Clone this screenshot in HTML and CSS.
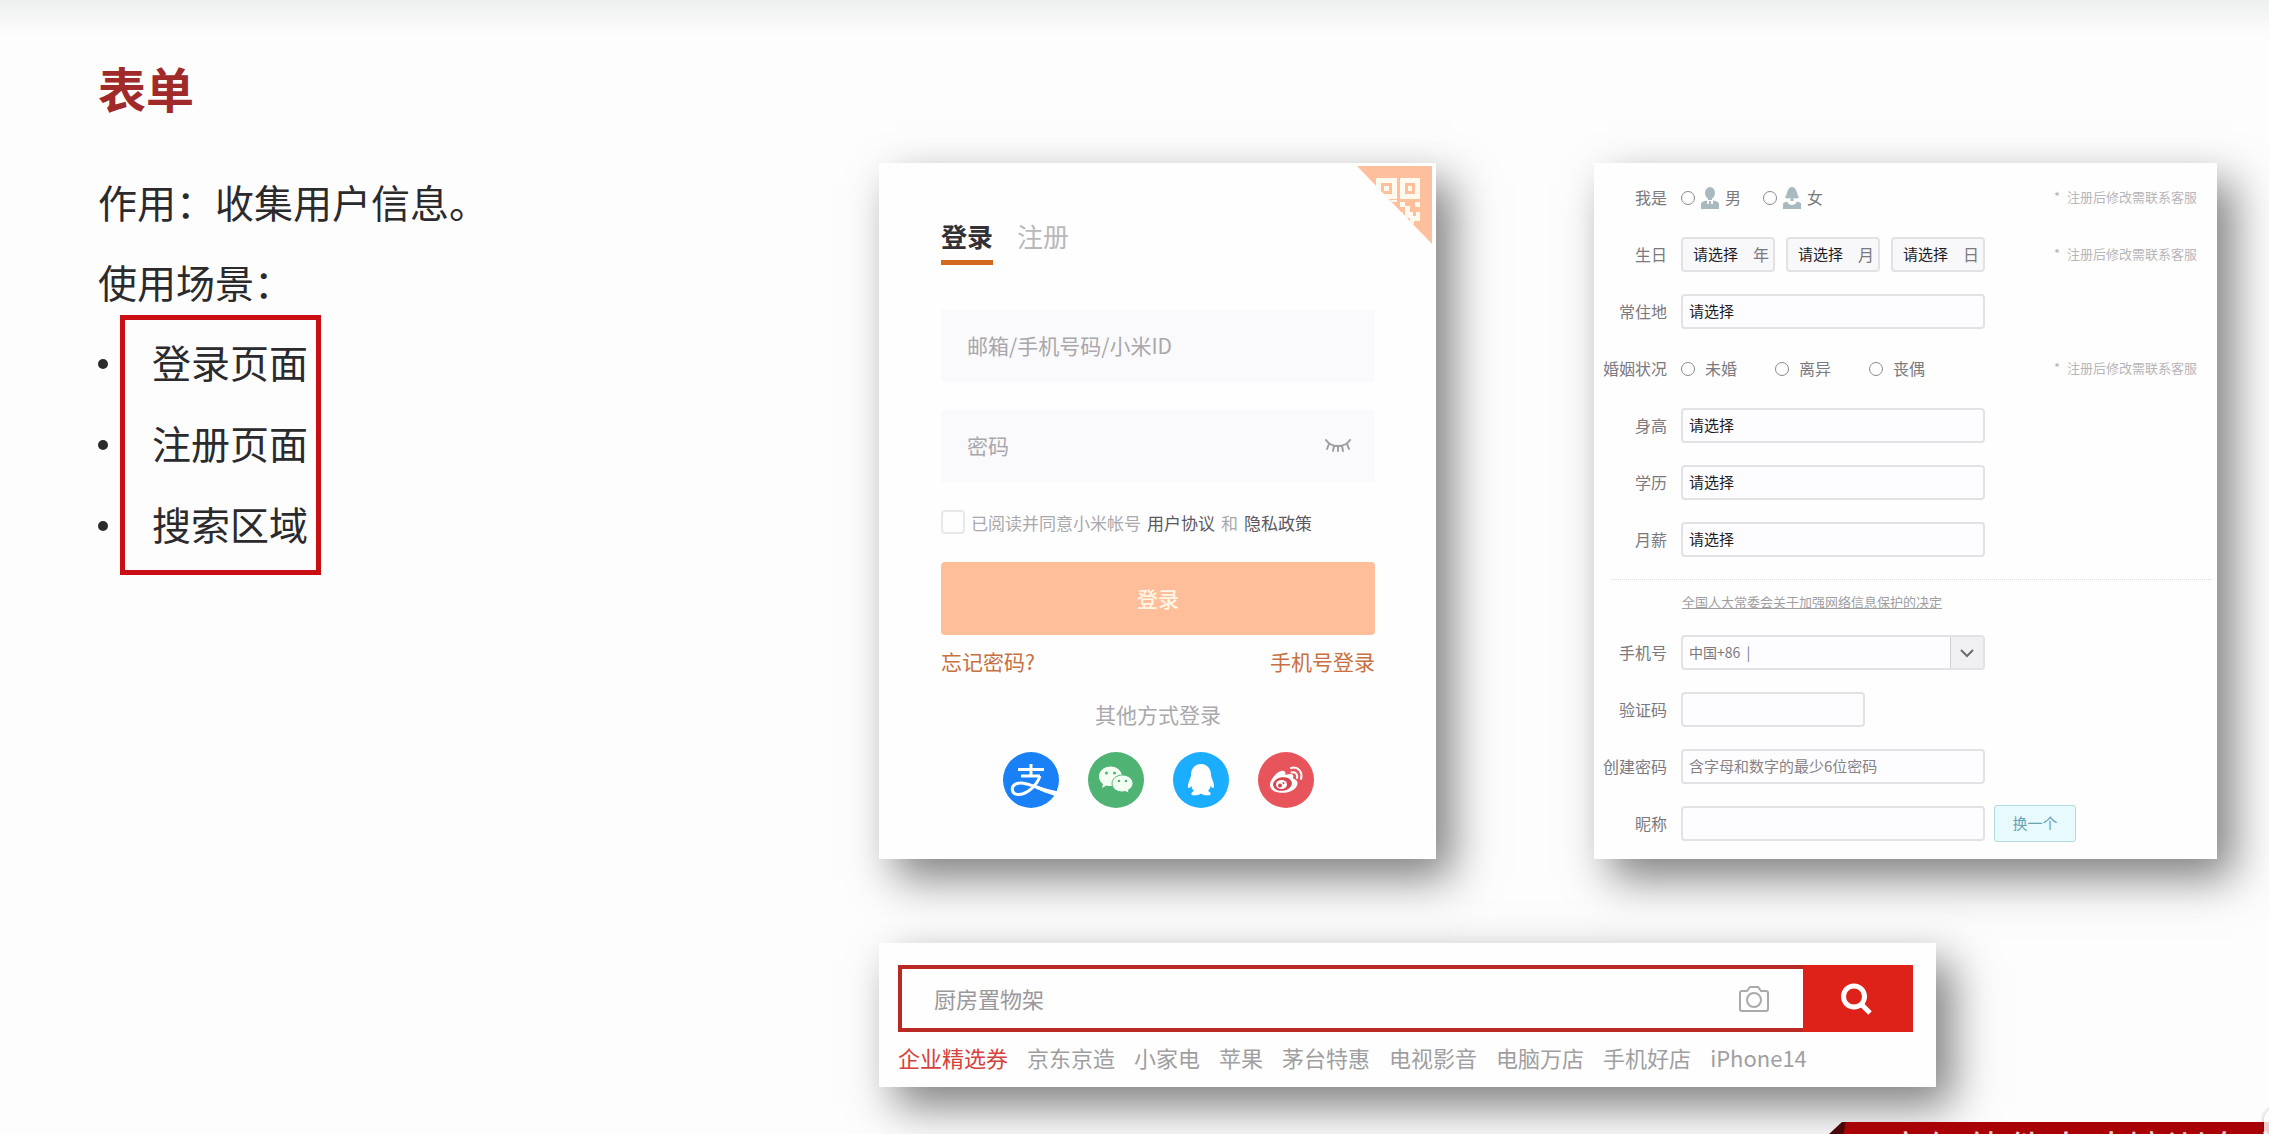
FILE: index.html
```html
<!DOCTYPE html>
<html lang="zh-CN">
<head>
<meta charset="utf-8">
<meta name="viewport" content="width=device-width, initial-scale=1">
<title>表单</title>
<link rel="stylesheet" href="styles.css">
</head>
<body>
<main class="slide">
  <section class="intro">
    <h1 class="title">表单</h1>
    <p class="line">作用：收集用户信息。</p>
    <p class="line">使用场景：</p>
    <ul class="scenes">
      <li>登录页面</li>
      <li>注册页面</li>
      <li>搜索区域</li>
    </ul>
  </section>

  <div class="examples">
    <div class="cards">
      <form class="card login">
        <svg class="qr" viewBox="0 0 75 78" aria-hidden="true">
          <defs><clipPath id="corner"><path d="M0 0H75V78Z"/></clipPath></defs>
          <path d="M0 0H75V78Z" fill="#febf9c"/>
          <g clip-path="url(#corner)">
            <path fill="#fffaf0" fill-rule="evenodd" d="M19 12H40V33H19ZM24 17V28H35V17ZM43 12H63V33H43ZM48 17V28H58V17Z"/>
            <path fill="#fffaf0" d="M27 20H32V25H27ZM51 20H55V25H51ZM43 36H48V41H43ZM58 36H63V41H58ZM48 40H53V46H56V50H59V46H63V55H57V58H53V52H48ZM43 46H46V50H43ZM34 34H40V36H34Z"/>
          </g>
        </svg>
        <div class="tabs">
          <button type="button" class="tab tab-on">登录</button>
          <button type="button" class="tab">注册</button>
        </div>
        <div class="login-field">
          <input type="text" aria-label="帐号" placeholder="邮箱/手机号码/小米ID">
        </div>
        <div class="login-field">
          <input type="password" aria-label="密码" placeholder="密码">
          <button type="button" class="eye" aria-label="显示密码">
            <svg viewBox="0 0 26 14" fill="none" stroke="#a19ea4" stroke-width="2" stroke-linecap="round"><path d="M1 1C6 9 20 9 25 1M4 5 2 10M9 7 8 12M17 7 18 12M22 5 24 10M13 8V12"/></svg>
          </button>
        </div>
        <div class="agree">
          <input type="checkbox" id="agree">
          <label for="agree">已阅读并同意小米帐号</label>
          <a href="#">用户协议</a>
          <span>和</span>
          <a href="#">隐私政策</a>
        </div>
        <button type="submit" class="submit">登录</button>
        <div class="help">
          <a href="#">忘记密码?</a>
          <a href="#">手机号登录</a>
        </div>
        <p class="other">其他方式登录</p>
        <div class="social">
          <a href="#" aria-label="支付宝">
            <svg viewBox="0 0 56 56">
              <circle cx="28" cy="28" r="28" fill="#1a80f5"/>
              <g fill="none" stroke="#fff" stroke-width="3">
                <path d="M15 17.500H41M28 12V24M18 24H37"/>
                <path d="M37 24C34 33 25 42 16 42.500C8 42.500 7 34 14 31.500C22 29 34 36 44 39"/>
              </g>
              <path d="M34 33.500C41 36.500 48 38 55 39.500L52 44C46 42 38 39 32 36Z" fill="#fff"/>
            </svg>
          </a>
          <a href="#" aria-label="微信">
            <svg viewBox="0 0 56 56">
              <circle cx="28" cy="28" r="28" fill="#4fb373"/>
              <path d="M22.500 14.500C16 14.500 11 19 11 24.500C11 27.500 12.500 30 15 32L14 36L18.500 33.500C25 35.500 34 32 34 24.500C34 19 29 14.500 22.500 14.500Z" fill="#f4fff4"/>
              <path d="M34.500 23C28.500 23 24 27 24 31.500C24 37 30 41.500 37.500 39.500L41 41.500L40.500 38C43 36.500 45 34 45 31.500C45 27 40.500 23 34.500 23Z" fill="#f4fff4" stroke="#4fb373"/>
              <g fill="#4fb373"><circle cx="18.500" cy="21" r="1.500"/><circle cx="26.500" cy="21" r="1.500"/><circle cx="31" cy="29" r="1.300"/><circle cx="38" cy="29" r="1.300"/></g>
            </svg>
          </a>
          <a href="#" aria-label="QQ">
            <svg viewBox="0 0 56 56">
              <circle cx="28" cy="28" r="28" fill="#1badff"/>
              <path d="M28 12C21.500 12 18 17 18 23C18 25 17 26 16.500 28C15 32 14 36 16 36C17 36 18 34 18.500 34C18.500 36 19.500 37.500 21 39C19 40 18 41 18.500 42.500C19.500 44 26 43.500 28 41.500C30 43.500 36.500 44 37.500 42.500C38 41 37 40 35 39C36.500 37.500 37.500 36 37.500 34C38 34 39 36 40 36C42 36 41 32 39.500 28C39 26 38 25 38 23C38 17 34.500 12 28 12Z" fill="#fff"/>
            </svg>
          </a>
          <a href="#" aria-label="微博">
            <svg viewBox="0 0 56 56">
              <circle cx="28" cy="28" r="28" fill="#e8545b"/>
              <path d="M23 19C26 18 28 19.500 27.500 23C33 21 36.500 22 35 26.500C42 28.500 40 35 35 38C27 43 12 41.500 12 33C12 28 18 20.500 23 19Z" fill="#fff"/>
              <ellipse cx="24.500" cy="32" rx="9.500" ry="6.800" fill="#d9434c" transform="rotate(-8 24.500 32)"/>
              <ellipse cx="23.500" cy="32.500" rx="5.500" ry="4.600" fill="#fff"/>
              <circle cx="22" cy="33.500" r="2" fill="#d9434c"/><circle cx="25.500" cy="31" r="1" fill="#d9434c"/>
              <g fill="none" stroke="#fff" stroke-width="2" stroke-linecap="round"><path d="M33 16C40 14 45 20 43 27"/><path d="M33.500 20.500C37 19.500 40 22 39 26"/></g>
            </svg>
          </a>
        </div>
      </form>

      <form class="card register">
        <div class="rows">
          <div class="row" role="radiogroup" aria-label="我是">
            <span class="name">我是</span>
            <div class="genders">
              <label class="gender">
                <input type="radio" name="gender">
                <svg viewBox="0 0 18 22" fill="#a9b9c0"><ellipse cx="9" cy="6" rx="5" ry="6"/><path d="M7 10H11V13H7ZM0 22V17C0 15 3 14 6 13.500V17H8V14H10V17H12V13.500C15 14 18 15 18 17V22Z"/></svg>
                <span>男</span>
              </label>
              <label class="gender">
                <input type="radio" name="gender">
                <svg viewBox="0 0 18 22" fill="#a9b9c0"><path d="M9 0C4 0 4.500 7 2 10.500C4 12 6 11.500 7.500 11V14H10.500V11C12 11.500 14 12 16 10.500C13.500 7 14 0 9 0ZM0 22V17C0 15.500 2 15 4 14.500C6 19 12 19 14 14.500C16 15 18 15.500 18 17V22Z"/></svg>
                <span>女</span>
              </label>
            </div>
            <span class="note"><span>*</span><span>注册后修改需联系客服</span></span>
          </div>
          <div class="row" role="group" aria-label="生日">
            <span class="name">生日</span>
            <div class="dates">
              <label class="date"><select><option>请选择</option></select><span>年</span></label>
              <label class="date"><select><option>请选择</option></select><span>月</span></label>
              <label class="date"><select><option>请选择</option></select><span>日</span></label>
            </div>
            <span class="note"><span>*</span><span>注册后修改需联系客服</span></span>
          </div>
          <div class="row">
            <label class="name" for="city">常住地</label>
            <select class="field" id="city"><option>请选择</option></select>
          </div>
          <div class="row" role="radiogroup" aria-label="婚姻状况">
            <span class="name">婚姻状况</span>
            <div class="marriage">
              <label><input type="radio" name="marriage"><span>未婚</span></label>
              <label><input type="radio" name="marriage"><span>离异</span></label>
              <label><input type="radio" name="marriage"><span>丧偶</span></label>
            </div>
            <span class="note"><span>*</span><span>注册后修改需联系客服</span></span>
          </div>
          <div class="row">
            <label class="name" for="height">身高</label>
            <select class="field" id="height"><option>请选择</option></select>
          </div>
          <div class="row">
            <label class="name" for="degree">学历</label>
            <select class="field" id="degree"><option>请选择</option></select>
          </div>
          <div class="row">
            <label class="name" for="salary">月薪</label>
            <select class="field" id="salary"><option>请选择</option></select>
          </div>
        </div>
        <hr class="divider">
        <div class="rows">
          <a href="#" class="law">全国人大常委会关于加强网络信息保护的决定</a>
          <div class="row">
            <label class="name" for="phone">手机号</label>
            <div class="phone">
              <input type="text" id="phone" value="中国+86  |">
              <button type="button" aria-label="选择国家">
                <svg viewBox="0 0 14 10" fill="none" stroke="#6d6b70" stroke-width="2"><path d="M1 2 7 8 13 2"/></svg>
              </button>
            </div>
          </div>
          <div class="row">
            <label class="name" for="code">验证码</label>
            <input type="text" class="field field-short" id="code">
          </div>
          <div class="row">
            <label class="name" for="pass">创建密码</label>
            <input type="text" class="field" id="pass" placeholder="含字母和数字的最少6位密码">
          </div>
          <div class="row">
            <label class="name" for="nick">昵称</label>
            <input type="text" class="field" id="nick">
            <button type="button" class="swap">换一个</button>
          </div>
        </div>
      </form>
    </div>

    <form class="card search">
      <div class="bar">
        <input type="text" aria-label="搜索" placeholder="厨房置物架">
        <button type="button" class="camera" aria-label="拍照搜索">
          <svg viewBox="0 0 30 26" fill="none" stroke="#aaa" stroke-width="2"><path d="M3 5H8L11 1H19L22 5H27Q29 5 29 7V23Q29 25 27 25H3Q1 25 1 23V7Q1 5 3 5Z"/><circle cx="15" cy="14" r="7"/></svg>
        </button>
        <button type="submit" class="go" aria-label="搜索">
          <svg viewBox="0 0 32 32" fill="none" stroke="#fff" stroke-width="5"><circle cx="14" cy="13.500" r="10.500"/><path d="M21 21 30 30"/></svg>
        </button>
      </div>
      <nav class="hot">
        <a href="#" class="hot-on">企业精选券</a>
        <a href="#">京东京造</a>
        <a href="#">小家电</a>
        <a href="#">苹果</a>
        <a href="#">茅台特惠</a>
        <a href="#">电视影音</a>
        <a href="#">电脑万店</a>
        <a href="#">手机好店</a>
        <a href="#">iPhone14</a>
      </nav>
    </form>
  </div>
</main>
<div class="ribbon">高级软件人才培训专家</div>
<div class="handle"></div>
</body>
</html>
```

FILE: styles.css
```css
*,
*::before,
*::after {
  box-sizing: border-box;
}

body {
  position: relative;
  min-height: 100vh;
  margin: 0;
  overflow: hidden;
  background: linear-gradient(#eef0f0, #fefdfe 36px);
  color: #2b2a2c;
  font-family: "Noto Sans CJK SC", "Noto Sans", sans-serif;
}

h1,
p,
ul {
  margin: 0;
  padding: 0;
}

button,
input,
select {
  margin: 0;
  padding: 0;
  border: 0;
  outline: 0;
  background: none;
  font: inherit;
  color: inherit;
  appearance: none;
}

a {
  color: inherit;
  text-decoration: none;
}

svg {
  display: block;
}

.slide {
  display: grid;
  grid-template-columns: minmax(0, 781fr) minmax(0, 1338fr);
  padding: 58px 52px 47px 98px;
}

/* Explanation on the left */
.title {
  margin-bottom: 45px;
  color: #a02a2a;
  font-size: 48px;
  line-height: 58px;
}

.line {
  font-size: 39px;
  line-height: 80px;
}

.scenes {
  position: relative;
  list-style: none;
  font-size: 39px;
  line-height: 81px;
}

.scenes li {
  display: flex;
  align-items: center;
  gap: 44px;
}

.scenes li::before {
  content: "";
  width: 10px;
  height: 10px;
  margin-top: 4px;
  border-radius: 50%;
  background: #2b2a2c;
}

.scenes::after {
  content: "";
  position: absolute;
  top: -6px;
  bottom: -11px;
  left: 22px;
  width: 201px;
  border: 5px solid #c90f14;
}

/* Example cards */
.examples {
  padding-top: 105px;
}

.cards {
  display: grid;
  grid-template-columns: minmax(0, 557fr) minmax(0, 623fr);
  gap: 158px;
  margin-bottom: 84px;
}

.card {
  position: relative;
  background: #fefefe;
  box-shadow: 16px 19px 42px rgba(0, 0, 0, 0.5);
}

/* Login */
.login {
  padding: 54px 61px 51px 62px;
  font-size: 21px;
}

.qr {
  position: absolute;
  top: 3px;
  right: 4px;
  width: 75px;
  height: 78px;
}

.tabs {
  display: flex;
  align-items: flex-start;
  gap: 24px;
  margin-bottom: 45px;
}

.tab {
  padding-bottom: 5px;
  border-bottom: 5px solid transparent;
  color: #b9b7ba;
  font-size: 26px;
  line-height: 38px;
}

.tab-on {
  border-color: #d2691e;
  color: #333135;
  font-weight: 700;
}

.login-field {
  display: flex;
  align-items: center;
  height: 72px;
  margin-bottom: 28px;
  padding: 0 24px;
  background: #faf9fb;
}

.login-field input {
  flex: 1;
  min-width: 0;
  padding: 0 0 2px 2px;
}

.login-field input::placeholder {
  color: #a9a7ab;
}

.eye svg {
  width: 26px;
  height: 14px;
}

.agree {
  display: flex;
  align-items: center;
  gap: 6px;
  height: 24px;
  margin-bottom: 28px;
  color: #aaa8ac;
  font-size: 17px;
  white-space: nowrap;
}

.agree input {
  width: 24px;
  height: 24px;
  border: 2px solid #e9e7eb;
  border-radius: 4px;
}

.agree a {
  color: #5b595d;
}

.submit {
  display: block;
  width: 100%;
  height: 73px;
  margin-bottom: 11px;
  padding-bottom: 2px;
  border-radius: 4px;
  background: #ffbe9a;
  color: #fff6e6;
  font-weight: 500;
}

.help {
  display: flex;
  justify-content: space-between;
  margin-bottom: 23px;
  color: #c8703f;
  line-height: 30px;
}

.other {
  margin-bottom: 23px;
  color: #aaa8ac;
  line-height: 30px;
  text-align: center;
}

.social {
  display: flex;
  justify-content: center;
  gap: 29px;
}

.social svg {
  width: 56px;
  height: 56px;
}

/* Registration */
.register {
  padding: 17px 20px 18px 0;
  color: #7b797d;
  font-size: 16px;
}

.rows {
  display: flex;
  flex-direction: column;
  gap: 22px;
}

.row {
  display: flex;
  align-items: center;
  height: 35px;
  white-space: nowrap;
}

.row span,
.name {
  padding-bottom: 1px;
}

.name {
  flex: none;
  width: 73px;
  margin-right: 14px;
  text-align: right;
}

.note {
  display: flex;
  gap: 7px;
  margin-left: auto;
  color: #b7b5b8;
  font-size: 13px;
}

.field,
.phone {
  width: 304px;
  height: 35px;
  border: 2px solid #e3e1e5;
  border-radius: 4px;
  background: #fdfcfe;
}

.field {
  padding: 0 6px 2px;
  font-size: 15px;
}

.field::placeholder {
  color: #858387;
}

select {
  padding-bottom: 2px;
  color: #1c1b1d;
  font-size: 15px;
}

.field-short {
  width: 184px;
}

.genders,
.marriage,
.dates {
  display: flex;
}

.genders {
  gap: 22px;
}

.gender {
  display: flex;
  align-items: center;
  gap: 6px;
}

.gender svg {
  width: 18px;
  height: 22px;
}

.marriage {
  gap: 38px;
}

.marriage label {
  display: flex;
  align-items: center;
  gap: 10px;
}

.register input[type="radio"] {
  width: 14px;
  height: 14px;
  border: 1px solid #8b898d;
  border-radius: 50%;
}

.dates {
  gap: 11px;
}

.date {
  display: flex;
  align-items: center;
  justify-content: space-between;
  width: 94px;
  height: 35px;
  padding: 0 4px 0 10px;
  border: 2px solid #e3e1e5;
  border-radius: 4px;
  background: #f8f7f9;
}

.divider {
  margin: 22px -14px 12px 18px;
  border: 0;
  border-top: 1px dotted #dedce0;
}

.law {
  margin-left: 88px;
  padding-bottom: 1px;
  color: #a09ea2;
  font-size: 13px;
  line-height: 20px;
  text-decoration: underline;
}

.phone {
  display: flex;
}

.phone input {
  flex: 1;
  min-width: 0;
  padding: 0 6px 2px;
  font-size: 14px;
  white-space: pre;
}

.phone button {
  display: grid;
  place-items: center;
  width: 33px;
  border-left: 1px solid #d3d1d5;
  background: #f0eff1;
}

.phone svg {
  width: 14px;
  height: 10px;
}

.swap {
  width: 82px;
  height: 37px;
  margin-left: 9px;
  padding-bottom: 2px;
  border: 1px solid #b3d9e2;
  border-radius: 3px;
  background: #e8fafe;
  color: #6aa3b1;
  font-size: 15px;
}

/* Search */
.search {
  width: 79%;
  padding: 22px 23px 14px 19px;
  font-size: 22px;
}

.bar {
  display: flex;
  align-items: center;
  height: 67px;
  margin-bottom: 9px;
  border: 4px solid #bb2924;
  border-right: 0;
}

.bar input {
  flex: 1;
  min-width: 0;
  padding: 0 0 2px 32px;
}

.bar input::placeholder {
  color: #9a989b;
}

.camera {
  margin-right: 34px;
}

.camera svg {
  width: 30px;
  height: 26px;
}

.go {
  display: grid;
  place-items: center;
  width: 110px;
  height: 67px;
  padding-right: 4px;
  background: #de2219;
}

.go svg {
  width: 32px;
  height: 32px;
}

.hot {
  display: flex;
  gap: 19px;
  color: #a09ea1;
  line-height: 32px;
  white-space: nowrap;
}

.hot-on {
  color: #d5413c;
}

/* Banner at the lower right corner */
.ribbon {
  position: absolute;
  right: 0;
  bottom: 0;
  width: 440px;
  height: 12px;
  padding-left: 57px;
  overflow: hidden;
  background: linear-gradient(100deg, #4a0508 16px, #a90206 17px);
  clip-path: polygon(13px 0, 100% 0, 100% 100%, 0 100%);
  color: #f3d3cf;
  font-size: 40px;
  line-height: 52px;
  white-space: nowrap;
}

.handle {
  position: absolute;
  right: -20px;
  bottom: -20px;
  width: 25px;
  height: 46px;
  border-radius: 12px;
  background: rgba(255, 255, 255, 0.8);
  box-shadow: 0 0 4px rgba(0, 0, 0, 0.3);
}
```
